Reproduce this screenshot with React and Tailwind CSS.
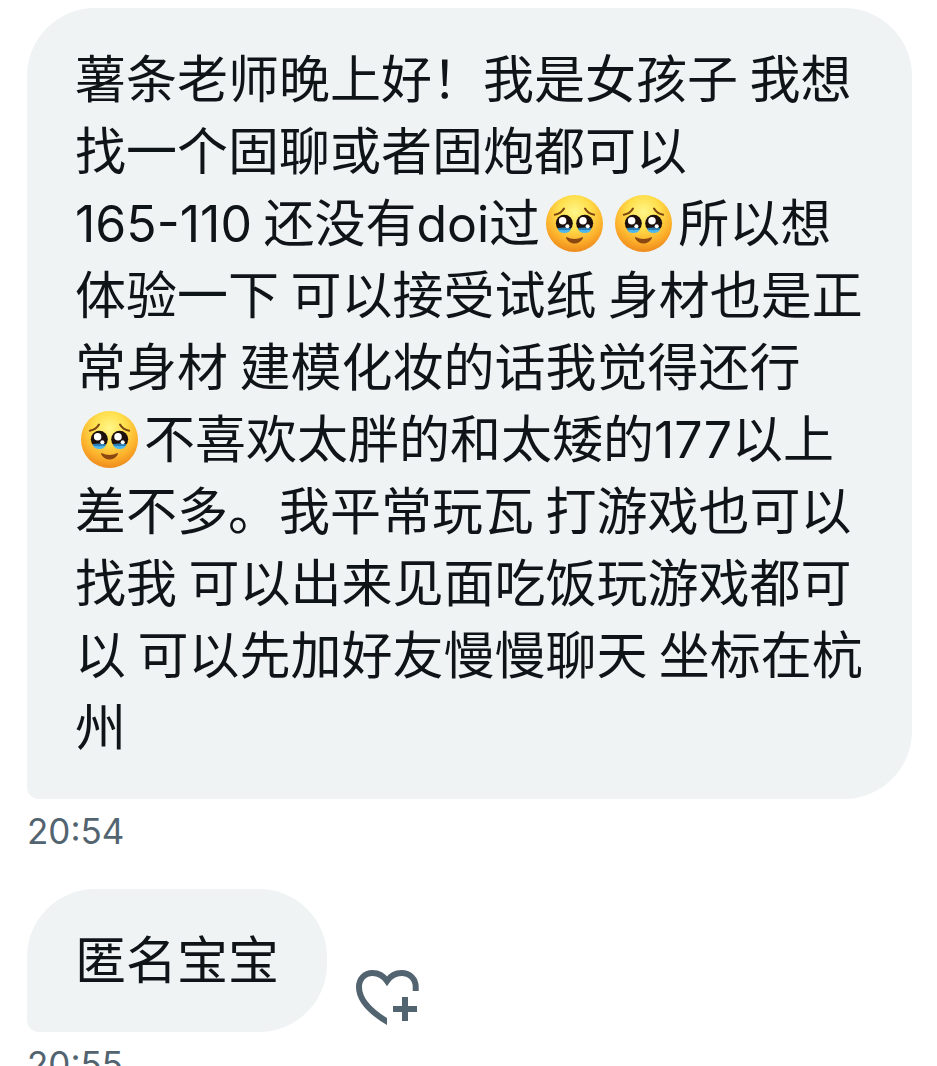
import { useId, useState } from "react";

const messages = [
  {
    id: 1,
    time: "20:54",
    lines: [
      "薯条老师晚上好！我是女孩子 我想",
      "找一个固聊或者固炮都可以",
      "165-110 还没有doi过🥹🥹所以想",
      "体验一下 可以接受试纸 身材也是正",
      "常身材 建模化妆的话我觉得还行",
      "🥹不喜欢太胖的和太矮的177以上",
      "差不多。我平常玩瓦 打游戏也可以",
      "找我 可以出来见面吃饭玩游戏都可",
      "以 可以先加好友慢慢聊天 坐标在杭",
      "州",
    ],
  },
  { id: 2, time: "20:55", lines: ["匿名宝宝"], canReact: true },
];

function Eye({ x }) {
  return (
    <g transform={`translate(${x} 83)`}>
      <circle r="25" fill="#1d100c" />
      <path d="M-19 17 Q-10 20 0 19 Q10 20 19 17 Q16 29 0 29 Q-16 29 -19 17Z" fill="#4fb9ee" />
      <path d="M-19 14 Q0 11 19 14 L18 19 Q0 23 -18 19Z" fill="#2c7fb5" />
      <circle cx="-5" cy="-7" r="11" fill="#fff" />
      <circle cx="9" cy="9" r="6" fill="#fff" />
    </g>
  );
}

function TearyFace() {
  const id = useId();
  return (
    <svg role="img" aria-label="🥹" viewBox="0 0 168 168" className="inline-block size-[57px] mx-[6px] align-[-10px]">
      <defs>
        <radialGradient id={id} cx="0.5" cy="0.3" r="0.7">
          <stop offset="0" stopColor="#fff68a" />
          <stop offset="0.4" stopColor="#ffdf4c" />
          <stop offset="0.75" stopColor="#fcb02b" />
          <stop offset="1" stopColor="#ee8a1c" />
        </radialGradient>
      </defs>
      <circle cx="84" cy="84" r="84" fill={`url(#${id})`} />
      <g fill="none" stroke="#7b4412" strokeWidth="6" strokeLinecap="round">
        <path d="M26 58 Q45 55 53 40" />
        <path d="M142 58 Q123 55 115 40" />
      </g>
      <Eye x={54} />
      <Eye x={114} />
      <path d="M60 124 Q84 136 108 124 Q110 125 108 129 Q99 143 84 143 Q69 143 60 129 Q58 125 60 124Z" fill="#8a4711" />
    </svg>
  );
}

function HeartPlus() {
  const id = useId();
  return (
    <svg viewBox="0 0 63 57" className="w-[63px] h-[57px]" aria-hidden="true">
      <clipPath id={id}>
        <path d="M0 0H63V22H31V57H0Z" />
      </clipPath>
      <path
        clipPath={`url(#${id})`}
        d="M37 56 C15 44 3 31 3 18 C3 10 8.5 4 16.5 4 C22.5 4 27.5 7 31 12 C34.5 7 39.5 4 45.5 4 C54 4 59.7 10 59.7 18 V24"
        fill="none"
        stroke="currentColor"
        strokeWidth="6"
      />
      <path d="M49 28V52M37 40H61" stroke="currentColor" strokeWidth="6" />
    </svg>
  );
}

// Latin letters and digits are set in Inter, everything else in the CJK face
function Line({ text }) {
  return (
    <span className="block h-[72px] whitespace-nowrap">
      {text.split(/(🥹|[\w-]+)/u).map((part, i) => {
        if (part === "🥹") return <TearyFace key={i} />;
        if (/^[\w-]+$/.test(part)) return <span key={i} className="font-['Inter',sans-serif] text-[50px]">{part}</span>;
        return part;
      })}
    </span>
  );
}

function Message({ message }) {
  const [liked, setLiked] = useState(false);

  return (
    <li>
      <div className="flex items-end gap-[29px]">
        <p className="rounded-[68px] rounded-bl-xl bg-[#eff3f4] px-12 pt-8 pb-[39px] font-['Noto_Sans_CJK_SC',sans-serif] text-[51px] leading-[72px] text-[#0f1419] last:grow">
          {message.lines.map(line => (
            <Line key={line} text={line} />
          ))}
        </p>
        {message.canReact && (
          <button
            type="button"
            aria-label="React"
            aria-pressed={liked}
            onClick={() => setLiked(!liked)}
            className="mb-1.5 text-[#536471]"
          >
            <HeartPlus />
          </button>
        )}
      </div>
      <time className="mt-2 block text-[35px] leading-[48px] text-[#536471]">{message.time}</time>
    </li>
  );
}

export default function App() {
  return (
    <main className="h-screen overflow-hidden bg-white pt-2 pr-[25px] pl-[27px] font-['Inter','Noto_Sans_CJK_SC',sans-serif]">
      <ul className="flex flex-col gap-[34px]">
        {messages.map(m => (
          <Message key={m.id} message={m} />
        ))}
      </ul>
    </main>
  );
}
